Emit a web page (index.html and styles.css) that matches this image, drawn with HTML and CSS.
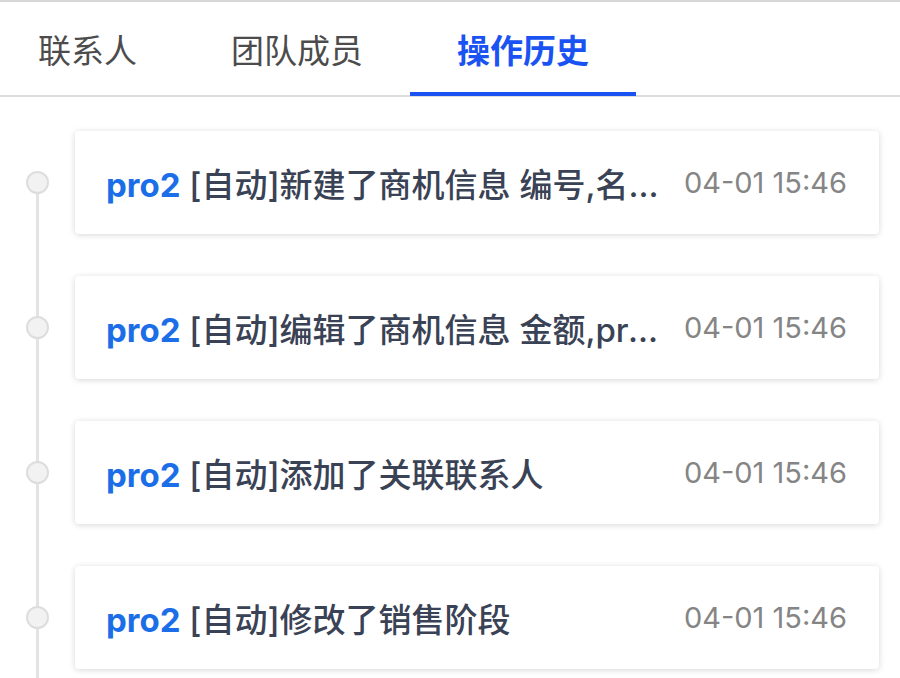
FILE: index.html
```html
<!DOCTYPE html>
<html lang="zh-CN">
<head>
    <meta charset="UTF-8">
    <meta name="viewport" content="width=device-width, initial-scale=1.0">
    <title>操作历史</title>
    <link rel="stylesheet" href="styles.css">
</head>
<body>
    <div class="tabs">
        <div class="tab">联系人</div>
        <div class="tab">团队成员</div>
        <div class="tab active">操作历史</div>
    </div>

    <div class="timeline">
        <div class="item">
            <span class="dot"></span>
            <div class="card">
                <div class="text"><span class="user">pro2</span> [自动]新建了商机信息 编号,名称,客户,金额,负责人</div>
                <div class="time">04-01 15:46</div>
            </div>
        </div>
        <div class="item">
            <span class="dot"></span>
            <div class="card">
                <div class="text"><span class="user">pro2</span> [自动]编辑了商机信息 金额,profit_rate,负责人</div>
                <div class="time">04-01 15:46</div>
            </div>
        </div>
        <div class="item">
            <span class="dot"></span>
            <div class="card">
                <div class="text"><span class="user">pro2</span> [自动]添加了关联联系人</div>
                <div class="time">04-01 15:46</div>
            </div>
        </div>
        <div class="item">
            <span class="dot"></span>
            <div class="card">
                <div class="text"><span class="user">pro2</span> [自动]修改了销售阶段</div>
                <div class="time">04-01 15:46</div>
            </div>
        </div>
    </div>
</body>
</html>
```

FILE: styles.css
```css
html, body {
    margin: 0;
    padding: 0;
    height: 100%;
    overflow: hidden;
}
body {
    font-family: "Inter", "Noto Sans CJK SC", sans-serif;
    background: #fff;
    color: #3a4255;
    border-top: 2px solid #d6d6d6;
    box-sizing: border-box;
}
.tabs {
    display: flex;
    padding-left: 38px;
    height: 93px;
    border-bottom: 2px solid #dcdcdc;
}
.tab {
    display: flex;
    align-items: center;
    padding: 0 47px;
    font-size: 33px;
    color: #4c4c4c;
    position: relative;
}
.tab:first-child {
    padding-left: 0;
}
.tab.active {
    color: #1a53f2;
    font-weight: bold;
}
.tab.active::after {
    content: '';
    position: absolute;
    left: 0;
    right: 0;
    bottom: -1px;
    height: 4px;
    background: #1a53f2;
}
.timeline {
    padding: 34px 21px 0 0;
}
.item {
    display: flex;
    align-items: center;
    margin-bottom: 42px;
    position: relative;
}
.item::before {
    content: '';
    position: absolute;
    left: 36px;
    top: 51px;
    width: 3px;
    height: 145px;
    background: #e3e3e3;
}
.dot {
    position: relative;
    flex: none;
    width: 19px;
    height: 19px;
    margin: 0 26px;
    border: 2px solid #dddddd;
    border-radius: 50%;
    background: #f2f2f2;
}
.card {
    flex: 1;
    min-width: 0;
    height: 103px;
    display: flex;
    align-items: center;
    padding: 0 32px 0 31px;
    background: #fff;
    border-radius: 4px;
    box-shadow: 0 1px 6px rgba(0,0,0,0.16);
}
.text {
    flex: 1;
    min-width: 0;
    white-space: nowrap;
    overflow: hidden;
    text-overflow: ellipsis;
    font-size: 33px;
    font-weight: 500;
}
.user {
    color: #1b6ee8;
    font-weight: bold;
}
.time {
    flex: none;
    margin-left: 22px;
    font-size: 29px;
    color: #858585;
}
```
